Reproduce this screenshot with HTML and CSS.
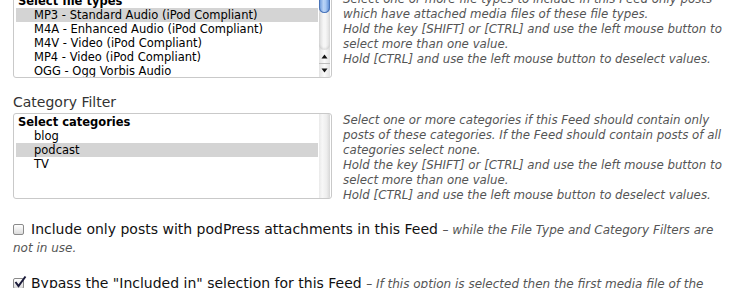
FILE: index.html
```html
<!DOCTYPE html>
<html>
<head>
<meta charset="utf-8">
<link rel="stylesheet" href="styles.css">
</head>
<body>
<div class="page">
  <div class="row row-first">
    <div class="listbox">
      <div class="list">
        <div class="opt head">Select file types</div>
        <div class="opt sel">MP3 - Standard Audio (iPod Compliant)</div>
        <div class="opt">M4A - Enhanced Audio (iPod Compliant)</div>
        <div class="opt">M4V - Video (iPod Compliant)</div>
        <div class="opt">MP4 - Video (iPod Compliant)</div>
        <div class="opt">OGG - Ogg Vorbis Audio</div>
      </div>
      <div class="sb sb-active">
        <div class="sb-thumb"></div>
        <div class="sb-track"></div>
        <div class="sb-arrow sb-up"><svg width="7" height="5" viewBox="0 0 7 5"><path d="M3.5 0.5 L6.5 4.5 L0.5 4.5 Z" fill="#111"/></svg></div>
        <div class="sb-arrow sb-down"><svg width="7" height="5" viewBox="0 0 7 5"><path d="M0.5 0.5 L6.5 0.5 L3.5 4.5 Z" fill="#111"/></svg></div>
      </div>
    </div>
    <div class="desc">
      <span class="line">Select one or more file types to include in this Feed only posts</span>
      <span class="line">which have attached media files of these file types.</span>
      <span class="line">Hold the key [SHIFT] or [CTRL] and use the left mouse button to</span>
      <span class="line">select more than one value.</span>
      <span class="line">Hold [CTRL] and use the left mouse button to deselect values.</span>
    </div>
  </div>

  <div class="label">Category Filter</div>

  <div class="row">
    <div class="listbox">
      <div class="list">
        <div class="opt head">Select categories</div>
        <div class="opt">blog</div>
        <div class="opt sel">podcast</div>
        <div class="opt">TV</div>
      </div>
      <div class="sb sb-disabled"></div>
    </div>
    <div class="desc">
      <span class="line">Select one or more categories if this Feed should contain only</span>
      <span class="line">posts of these categories. If the Feed should contain posts of all</span>
      <span class="line">categories select none.</span>
      <span class="line">Hold the key [SHIFT] or [CTRL] and use the left mouse button to</span>
      <span class="line">select more than one value.</span>
      <span class="line">Hold [CTRL] and use the left mouse button to deselect values.</span>
    </div>
  </div>

  <p class="check-line"><span class="cb"></span>Include only posts with podPress attachments in this Feed <em class="note">– while the File Type and Category Filters are<br>not in use.</em></p>

  <p class="check-line"><span class="cb cb-checked"><svg width="14" height="14" viewBox="0 0 14 14"><path d="M2.5 7 L5.5 11 L12.5 1.5" fill="none" stroke="#1a1a3a" stroke-width="2"/></svg></span>Bypass the "Included in" selection for this Feed <em class="note">– If this option is selected then the first media file of the post will be used.</em></p>
</div>
</body>
</html>
```
FILE: styles.css
```css
html, body {
  margin: 0;
  padding: 0;
  background: #fff;
  overflow: hidden;
}
.page {
  padding-left: 13px;
  font-family: "DejaVu Sans", "Liberation Sans", sans-serif;
  color: #333;
}
.row {
  display: flex;
  align-items: flex-start;
  gap: 11px;
}
.row-first {
  margin-top: -8px;
}
.listbox {
  box-sizing: border-box;
  width: 319px;
  height: 86px;
  border: 1px solid #c9c9c9;
  border-radius: 3px;
  display: flex;
  overflow: hidden;
  background: #fff;
}
.list {
  flex: 1;
  padding: 1px 1px 0 2px;
  overflow: hidden;
}
.opt {
  height: 14px;
  line-height: 14px;
  font-size: 11.5px;
  color: #000;
  padding-left: 18px;
  white-space: nowrap;
}
.opt.head {
  font-weight: bold;
  padding-left: 2px;
}
.opt.sel {
  background: #d4d4d4;
}
.sb {
  width: 11px;
  flex: none;
  display: flex;
  flex-direction: column;
  margin-right: 1px;
}
.sb-active {
  background: linear-gradient(to right, #d8d8d8, #f6f6f6 40%, #f6f6f6 60%, #dcdcdc);
}
.sb-thumb {
  height: 20px;
  border-radius: 0 0 6px 6px;
  background: linear-gradient(to right, #5f8fd6, #b9d3f6 40%, #a9c9f4 60%, #4f81cf);
  box-shadow: inset 0 0 0 1px #4a74b8;
}
.sb-track {
  flex: 1;
  border-radius: 0 0 6px 6px;
  box-shadow: inset 0 -2px 2px rgba(0,0,0,0.08);
}
.sb-arrow {
  height: 13px;
  display: flex;
  align-items: center;
  justify-content: center;
  background: linear-gradient(to right, #e2e2e2, #fbfbfb 50%, #e2e2e2);
}
.sb-down {
  border-top: 1px solid #bdbdbd;
}
.sb-disabled {
  background: linear-gradient(to right, #e9e9e9, #f7f7f7 30%, #ededed 70%, #d6d6d6);
}
.desc {
  font-size: 11.8px;
  line-height: 15px;
  font-style: italic;
  color: #555;
  white-space: nowrap;
}
.desc .line {
  display: block;
}
.label {
  margin: 16px 0 2px;
  font-size: 14px;
  line-height: 17px;
  color: #333;
}
.check-line {
  margin: 17px 0 0;
  font-size: 14px;
  line-height: 18px;
  color: #111;
  padding-right: 20px;
}
.check-line + .check-line {
  margin-top: 18px;
}
.note {
  font-size: 12px;
  line-height: 1;
  color: #555;
}
.cb {
  display: inline-block;
  position: relative;
  box-sizing: border-box;
  width: 11px;
  height: 11px;
  margin-right: 7px;
  vertical-align: -1px;
  border: 1px solid #8a8a8a;
  border-radius: 2px;
  background: linear-gradient(#ffffff, #dcdcdc);
}
.cb svg {
  position: absolute;
  left: -1px;
  top: -4px;
}
```
